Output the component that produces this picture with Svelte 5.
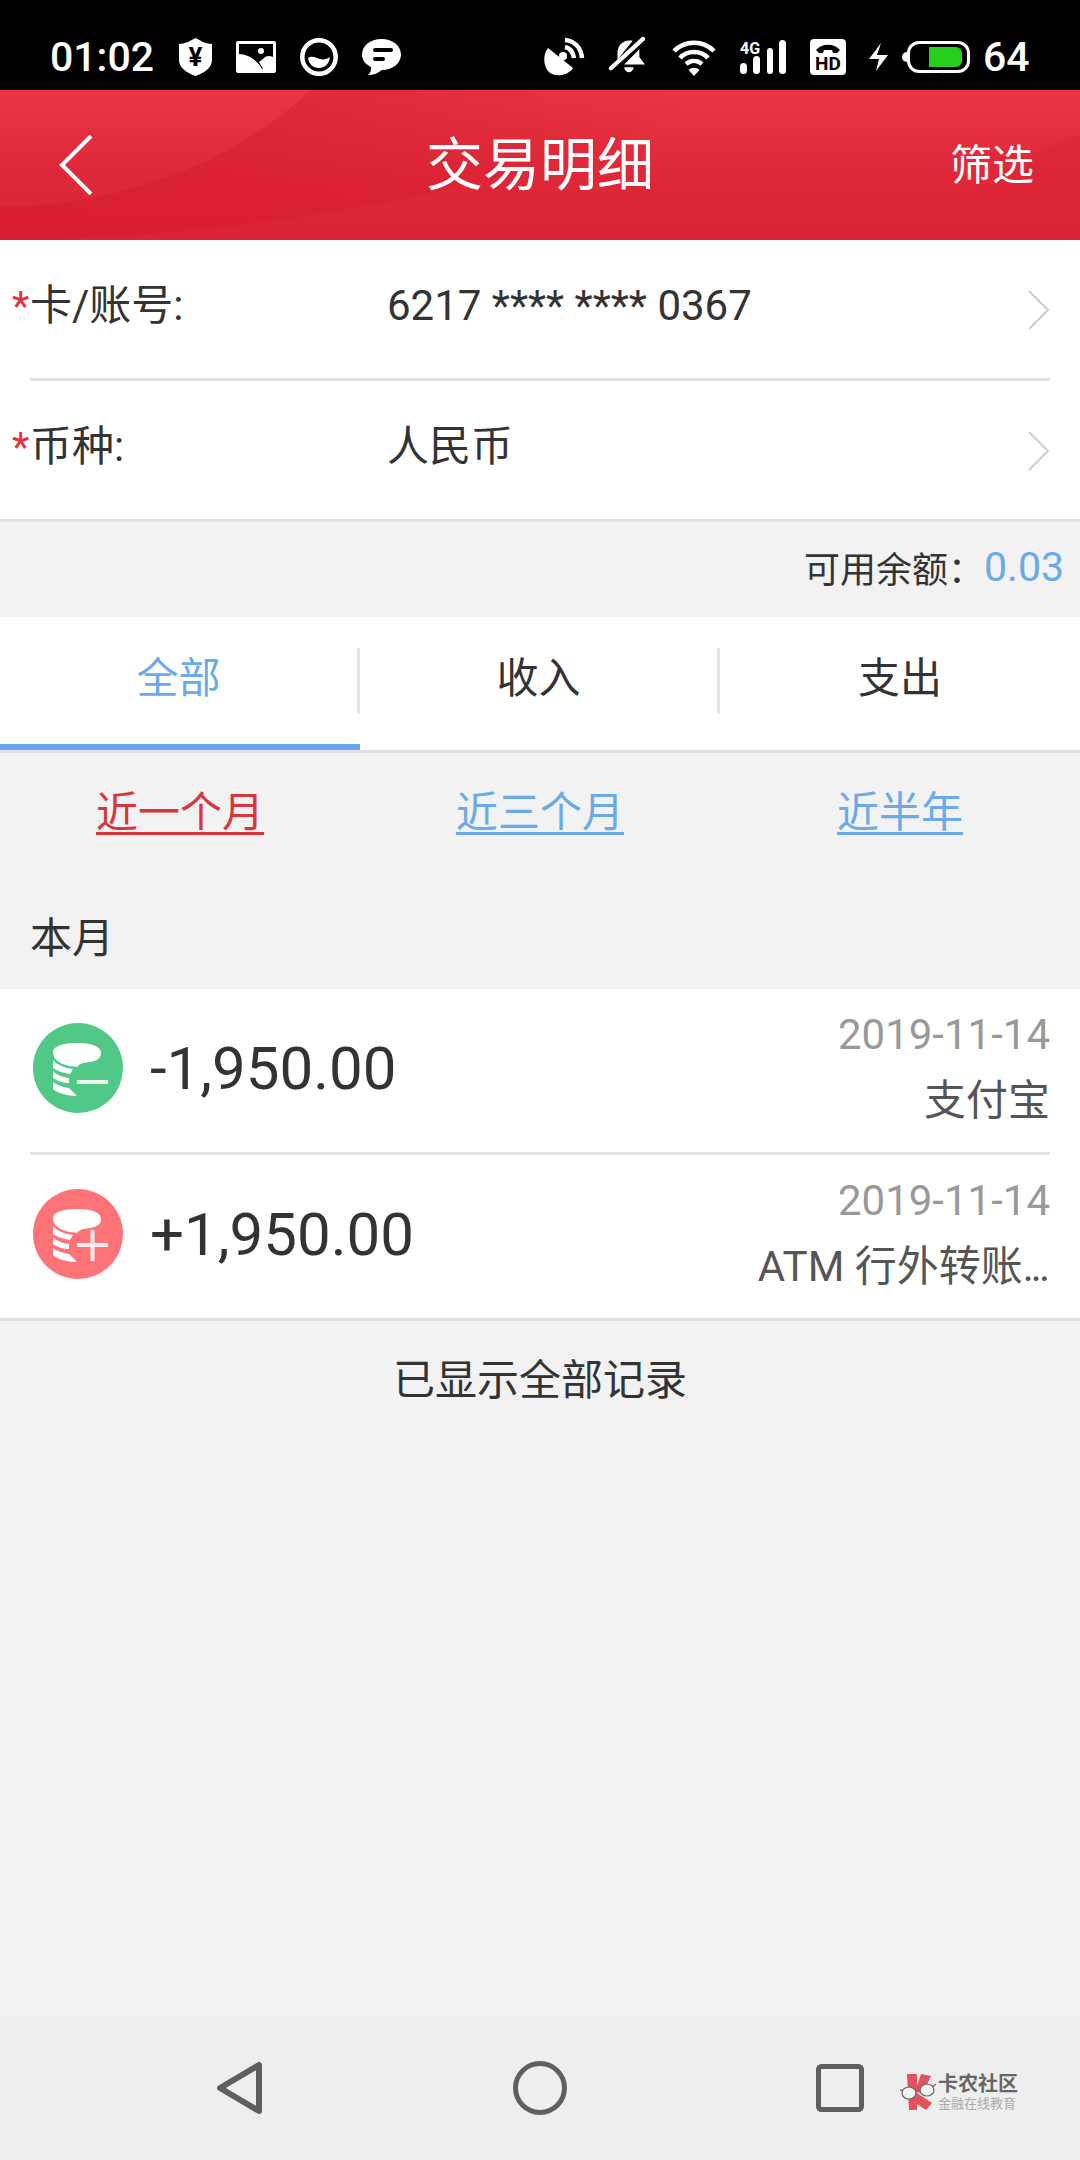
<script>
  const tabs = ['全部', '收入', '支出'];
  const ranges = ['近一个月', '近三个月', '近半年'];
</script>

<div class="page">
  <div class="status">
    <span class="time">01:02</span>
    <svg class="i-shield" viewBox="0 0 33 38"><path d="M16.5 0 L24 4 Q29 6 33 6 V22 Q33 32 16.5 38 Q0 32 0 22 V6 Q4 6 9 4Z" fill="#fff"/><text x="16.5" y="28" text-anchor="middle" class="yen">¥</text></svg>
    <svg class="i-pic" viewBox="0 0 40 32"><rect width="40" height="32" rx="2" fill="#fff"/><path d="M3 3H37V16C33 14 30 15 28 17L23 21L27 28H26C22 20 12 13 3 13Z" fill="#000"/><circle cx="25" cy="10" r="3" fill="#fff"/></svg>
    <svg class="i-ring" viewBox="0 0 38 38"><circle cx="19" cy="19" r="16.700" fill="none" stroke="#fff" stroke-width="4.500"/><path d="M8 20C12 17 17 20 20 21C24 22 27 21 30 19C29 26 25 30 19 30C13 30 9 26 8 20Z" fill="#fff"/></svg>
    <svg class="i-chat" viewBox="0 0 39 36"><path fill="#fff" d="M19.5 0C31 0 39 7 39 15.5S31 31 20 31C16 34 12 36 6 36C8.500 34 9.500 31 9 28C3 25 0 21 0 15.500C0 7 8 0 19.500 0Z"/><rect x="11" y="9" width="20" height="4" rx="2" fill="#000"/><rect x="11" y="18" width="12" height="4" rx="2" fill="#000"/></svg>
    <span class="grow"></span>
    <svg class="i-sat" viewBox="0 0 38 38"><path fill="#fff" d="M4 10 L29 30 C24 38 10 40 4 33 C-1 27 -1 16 4 10Z"/><path d="M16 17 L20 14 L23 20 L19 23Z" fill="#fff"/><circle cx="19" cy="18" r="4" fill="#fff"/><path d="M21 9C26 10 29 14 30 20M21 2C31 3 37 10 38 20" fill="none" stroke="#fff" stroke-width="4.500"/></svg>
    <svg class="i-bell" viewBox="0 0 40 38"><path fill="#fff" d="M26 4C16 2 10 9 10 16V24Z"/><path fill="#fff" d="M33 13V21L39 29H17Z"/><path d="M17 32H27C26 39 18 39 17 32Z" fill="#fff"/><path d="M3 33 37 2" stroke="#fff" stroke-width="4.500" stroke-linecap="round"/></svg>
    <svg class="i-wifi" viewBox="0 0 44 38"><g fill="none" stroke="#fff" stroke-width="4.500"><path d="M2 13C13 2 31 2 42 13"/><path d="M8 20C15 12 29 12 36 20"/><path d="M14 26C19 22 25 22 30 26"/></g><path d="M16.500 32C20 29 24 29 27.500 32L22 38Z" fill="#fff"/></svg>
    <svg class="i-signal" viewBox="0 0 47 34"><text x="0" y="14" class="fourg">4G</text><g fill="#fff"><rect x="0" y="23" width="7" height="11" rx="3.500"/><rect x="13" y="16" width="7" height="18" rx="3.500"/><rect x="27" y="8" width="6" height="26" rx="3"/><rect x="39" y="0" width="7" height="34" rx="3.500"/></g></svg>
    <svg class="i-hd" viewBox="0 0 36 36"><rect width="36" height="36" rx="4" fill="#fff"/><path d="M6 11C12 4 24 4 30 11L27 14H23L22 11H14L13 14H9Z" fill="#000"/><text x="18" y="31" text-anchor="middle" class="hd">HD</text></svg>
    <svg class="i-bolt" viewBox="0 0 19 28"><path fill="#fff" d="M12 0 8 12H19L7 28 10 16H0Z"/></svg>
    <div class="battery"><span class="tip"></span><span class="body"><span class="fill"></span></span></div>
    <span class="pct">64</span>
  </div>

  <header class="head">
    <svg class="deco" viewBox="0 0 1080 150" preserveAspectRatio="none" aria-hidden="true">
      <defs>
        <linearGradient id="sh" x1="0" y1="0" x2="1" y2="0"><stop offset="0" stop-color="#d41a2b" stop-opacity=".5"/><stop offset=".35" stop-color="#d41a2b" stop-opacity=".45"/><stop offset="1" stop-color="#d41a2b" stop-opacity="0"/></linearGradient>
        <linearGradient id="sh2" x1="0" y1="0" x2="0" y2="1"><stop offset="0" stop-color="#d41a2b" stop-opacity=".8"/><stop offset=".8" stop-color="#d41a2b" stop-opacity="0"/></linearGradient>
      </defs>
      <path d="M0 117C120 117 240 70 310 0H700C640 70 300 150 0 150Z" fill="url(#sh)"/>
      <path d="M946 125C990 90 1030 60 1080 45V150H930Z" fill="url(#sh2)" opacity=".4"/>
    </svg>
    <button class="back" aria-label="返回"><svg viewBox="0 0 34 60"><path d="M32 1 3 30 32 59" fill="none" stroke="#fff" stroke-width="4"/></svg></button>
    <h1>交易明细</h1>
    <span class="filter">筛选</span>
  </header>

  <section class="form">
    <div class="frow">
      <span class="flabel"><i>*</i>卡/账号:</span>
      <span class="fval">6217 **** **** 0367</span>
      <svg class="chev" viewBox="0 0 22 40"><path d="M1 1 20 20 1 39" fill="none" stroke="#ccc" stroke-width="2"/></svg>
    </div>
    <div class="frow last">
      <span class="flabel"><i>*</i>币种:</span>
      <span class="fval">人民币</span>
      <svg class="chev" viewBox="0 0 22 40"><path d="M1 1 20 20 1 39" fill="none" stroke="#ccc" stroke-width="2"/></svg>
    </div>
  </section>

  <div class="balance"><span>可用余额：</span><b>0.03</b></div>

  <nav class="tabs">
    {#each tabs as t, i}
      <div class="tab" class:on={i === 0}><span class="tabtxt" class:sep={i < 2}>{t}</span></div>
    {/each}
  </nav>

  <div class="ranges">
    {#each ranges as r, i}
      <div class="rng"><span class:red={i === 0}>{r}</span></div>
    {/each}
  </div>

  <div class="month">本月</div>

  <section class="list">
    <div class="tx">
      <svg class="coin" viewBox="0 0 90 90">
        <circle cx="45" cy="45" r="45" fill="#50c986"/>
        <g fill="#fff"><path d="M20 29C20 23 31 20 44 20C58 20 68 23 68 30C68 36 63 38 57 39C50 40 47 40 44 44C36 43 20 41 20 29Z"/><path d="M20 37C24 42 32 45 40 46L37 51C30 50 24 48 20 45Z"/><path d="M20 48C24 52 29 54 36 55L36 60C30 60 24 58 20 55Z"/><path d="M20 59C24 62 29 64 36 65L44 73C34 73 24 70 20 66Z"/></g>
        <rect x="44" y="57" width="31" height="4" fill="#eaf8f0"/>
      </svg>
      <div class="amt">-1,950.00</div>
      <div class="meta"><div class="date">2019-11-14</div><div class="who">支付宝</div></div>
    </div>
    <div class="tx last">
      <svg class="coin" viewBox="0 0 90 90">
        <circle cx="45" cy="45" r="45" fill="#fd7378"/>
        <g fill="#fff"><path d="M20 29C20 23 31 20 44 20C58 20 68 23 68 30C68 36 63 38 57 39C50 40 47 40 44 44C36 43 20 41 20 29Z"/><path d="M20 37C24 42 32 45 40 46L37 51C30 50 24 48 20 45Z"/><path d="M20 48C24 52 29 54 36 55L36 60C30 60 24 58 20 55Z"/><path d="M20 59C24 62 29 64 36 65L44 73C34 73 24 70 20 66Z"/></g>
        <path d="M44 56H75M59.500 41V72" stroke="#ffecec" stroke-width="4" fill="none"/>
      </svg>
      <div class="amt">+1,950.00</div>
      <div class="meta"><div class="date">2019-11-14</div><div class="who">ATM 行外转账<span class="dots">...</span></div></div>
    </div>
  </section>

  <div class="done">已显示全部记录</div>

  <footer class="navbar">
    <svg class="n-back" viewBox="0 0 50 54"><path d="M44 4V50L5 27Z" fill="none" stroke="#5f5f5f" stroke-width="6" stroke-linejoin="round"/></svg>
    <svg class="n-home" viewBox="0 0 54 54"><circle cx="27" cy="27" r="24.500" fill="none" stroke="#5f5f5f" stroke-width="5"/></svg>
    <svg class="n-square" viewBox="0 0 48 48"><rect x="2.500" y="2.500" width="43" height="43" rx="3" fill="none" stroke="#5f5f5f" stroke-width="5"/></svg>
    <div class="logo">
      <svg class="logo-mark" viewBox="0 0 36 38">
        <path fill="#e5525f" d="M7 1H17V37H9Z"/>
        <path fill="#e5525f" d="M21 1 31 3 23 20 15 19Z"/>
        <path fill="#e5525f" d="M17 20 32 30 26 37 17 31Z"/>
        <path d="M0 17 3 18M32 14 36 11" stroke="#777" stroke-width="1.500"/>
        <ellipse cx="9" cy="20" rx="7" ry="6" fill="#f4f4f4" stroke="#666" stroke-width="1.200"/>
        <ellipse cx="27" cy="17" rx="7" ry="6" fill="#f4f4f4" stroke="#666" stroke-width="1.200"/>
      </svg>
      <div class="logo-text"><div class="l1">卡农社区</div><div class="l2">金融在线教育</div></div>
    </div>
  </footer>
</div>

<style>
  :global(body) { margin: 0; background: #f2f2f2; }
  .page {
    width: 1080px; height: 2160px; display: flex; flex-direction: column; overflow: hidden;
    background: #f2f2f2; color: #333;
    font-family: Roboto, "Noto Sans CJK SC", sans-serif; font-size: 42px;
  }
  .status { height: 90px; flex: none; background: #000; color: #fff; display: flex; align-items: center; padding-left: 50px; box-sizing: border-box; }
  .time { font-size: 41px; width: 100px; font-weight: 500; line-height: 1; margin-top: 24px; }
  .grow { flex: 1; }
  .status svg { flex: none; display: block; overflow: visible; }
  .i-shield { width: 33px; height: 38px; margin-left: 29px; margin-top: 24px; }
  .i-pic { width: 40px; height: 32px; margin-left: 24px; margin-top: 24px; }
  .i-ring { width: 38px; height: 38px; margin-left: 24px; margin-top: 24px; }
  .i-chat { width: 39px; height: 36px; margin-left: 24px; margin-top: 24px; }
  .i-sat { width: 38px; height: 38px; margin-top: 24px; }
  .i-bell { width: 38px; height: 36px; margin-left: 26px; margin-top: 20px; }
  .i-wifi { width: 44px; height: 38px; margin-left: 26px; margin-top: 24px; }
  .i-signal { width: 47px; height: 34px; margin-left: 24px; margin-top: 24px; }
  .i-hd { width: 36px; height: 36px; margin-left: 23px; margin-top: 24px; }
  .i-bolt { width: 19px; height: 28px; margin-left: 23px; margin-top: 24px; }
  .yen { font: 700 26px Roboto, sans-serif; fill: #000; }
  .fourg { font: 700 16px Roboto, sans-serif; fill: #fff; }
  .hd { font: 700 19px Roboto, sans-serif; fill: #000; }
  .battery { display: flex; align-items: center; margin-left: 14px; margin-top: 24px; }
  .tip { width: 5px; height: 10px; background: #fff; border-radius: 5px 0 0 5px; }
  .body { width: 63px; height: 32px; box-sizing: border-box; border: 3px solid #fff; border-radius: 12px; display: flex; justify-content: flex-end; align-items: center; padding-right: 5px; }
  .fill { width: 33px; height: 20px; background: #25cf1c; border-radius: 0 6px 6px 0; }
  .pct { font-size: 41px; font-weight: 500; width: 46px; margin-left: 13px; margin-right: 51px; line-height: 1; margin-top: 24px; }

  .head { height: 150px; flex: none; position: relative; display: flex; align-items: center; justify-content: center; color: #fff; background: linear-gradient(180deg, #e83545 0%, #de2737 60%, #db2335 100%); }
  .deco { position: absolute; inset: 0; width: 100%; height: 100%; }
  .back { position: absolute; left: 59px; top: 45px; width: 34px; height: 60px; padding: 0; border: 0; background: none; }
  .back svg { width: 34px; height: 60px; display: block; }
  .head h1 { position: relative; margin: 0; font-size: 57px; font-weight: 400; line-height: 1; }
  .filter { position: absolute; right: 46px; top: 55px; line-height: 42px; font-size: 42px; }

  .form { background: #fff; border-bottom: 3px solid #e2e2e2; flex: none; box-sizing: border-box; }
  .frow { height: 141px; box-sizing: border-box; margin-left: 30px; margin-right: 30px; border-bottom: 3px solid #e2e2e2; display: flex; align-items: center; padding-bottom: 5px; position: relative; }
  .frow.last { border-bottom: 0; height: 138px; padding-bottom: 5px; }
  .flabel { width: 357px; flex: none; position: relative; line-height: 1.2; }
  .flabel i { position: absolute; left: -18px; top: 2px; color: #e8303c; font-style: normal; font-size: 40px; }
  .fval { flex: 1; line-height: 1.2; }
  .chev { width: 22px; height: 40px; margin-top: 6px; flex: none; }

  .balance { height: 95px; flex: none; box-sizing: border-box; display: flex; align-items: center; justify-content: flex-end; padding: 0 16px 5px 0; font-size: 36px; }
  .balance b { font-weight: 400; font-size: 41px; color: #6aa9ea; }

  .tabs { height: 133px; flex: none; display: flex; background: #fff; border-bottom: 3px solid #e2e2e2; }
  .tab { flex: 1 1 0; height: 133px; box-sizing: border-box; padding-top: 31px; }
  .tab.on { border-bottom: 6px solid #68a6ef; }
  .tab.on .tabtxt { color: #6aa9ea; }
  .tabtxt { display: block; height: 66px; box-sizing: border-box; line-height: 62px; text-align: center; font-size: 42px; }
  .tabtxt.sep { border-right: 3px solid #e4e4e4; }

  .ranges { display: flex; height: 117px; flex: none; align-items: flex-start; padding-top: 35px; box-sizing: border-box; }
  .rng { flex: 1 1 0; text-align: center; }
  .rng span { color: #6aa9ea; text-decoration: underline; text-decoration-thickness: 3px; text-underline-offset: 5px; line-height: 50px; }
  .rng span.red { color: #d8363c; }

  .month { height: 119px; flex: none; box-sizing: border-box; padding: 44px 0 0 30px; line-height: 50px; }

  .list { background: #fff; flex: none; border-bottom: 3px solid #e2e2e2; }
  .tx { height: 166px; box-sizing: border-box; margin: 0 30px; border-bottom: 3px solid #e2e2e2; display: flex; align-items: center; padding-left: 3px; }
  .tx.last { border-bottom: 0; height: 163px; }
  .coin { width: 90px; height: 90px; flex: none; margin-top: -5px; margin-right: 27px; }
  .amt { font-size: 60px; flex: 1; line-height: 1; margin-top: -3px; }
  .meta { text-align: right; margin-top: -2px; }
  .date { color: #999; line-height: 48px; margin-top: -3px; font-size: 42px; }
  .who { color: #555; line-height: 48px; margin-top: 18px; font-size: 42px; }
  .dots { letter-spacing: -3px; margin-right: 3px; }

  .done { height: 120px; flex: none; text-align: center; line-height: 120px; }

  .navbar { flex: 1; display: flex; position: relative; background: #eee; margin-top: 575px; }
  .n-back { position: absolute; left: 215px; top: 45px; width: 50px; height: 54px; }
  .n-home { position: absolute; left: 513px; top: 45px; width: 54px; height: 54px; }
  .n-square { position: absolute; left: 816px; top: 48px; width: 48px; height: 48px; }
  .logo { position: absolute; left: 900px; top: 57px; display: flex; gap: 2px; align-items: center; }
  .logo-mark { width: 36px; height: 38px; }
  .logo-text { line-height: 1; }
  .l1 { font-size: 20px; font-weight: 700; color: #666; width: 82px; white-space: nowrap; }
  .l2 { font-size: 13px; color: #aaa; margin-top: 3px; white-space: nowrap; }
</style>
